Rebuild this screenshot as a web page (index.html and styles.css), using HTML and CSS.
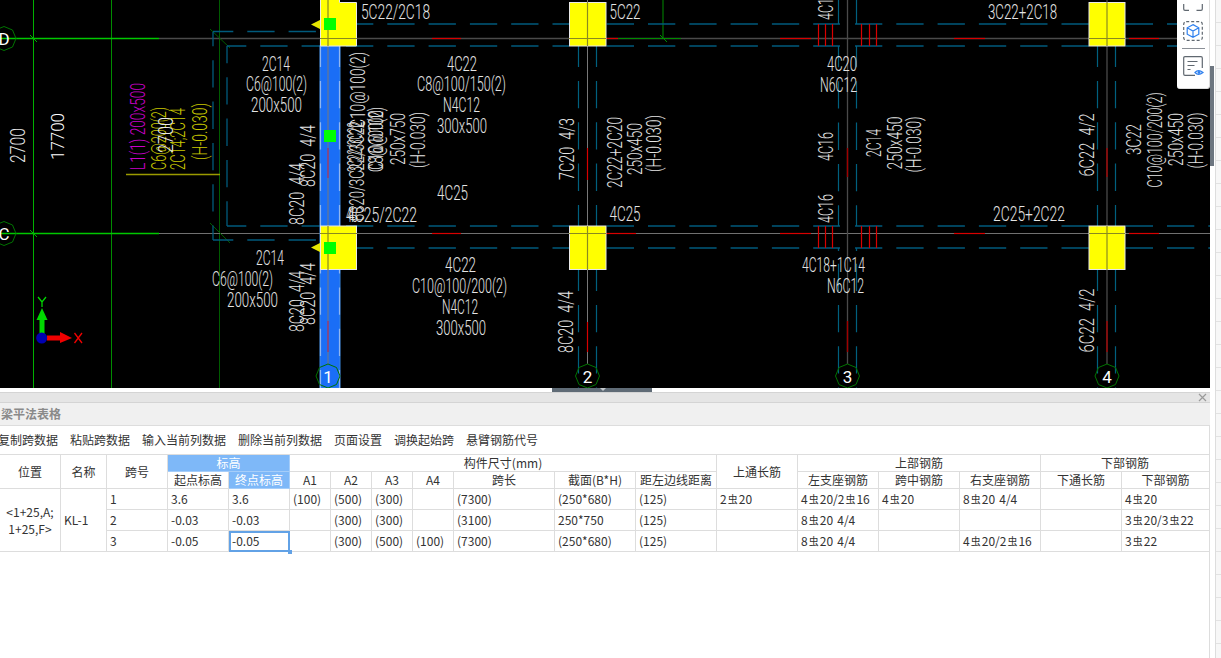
FILE: index.html
```html
<!DOCTYPE html>
<html lang="zh">
<head>
<meta charset="utf-8">
<title>梁平法表格</title>
<link rel="stylesheet" href="styles.css">
</head>
<body>
<div class="app">
<div class="main">
<section class="canvas">
<svg class="cad" width="1210" height="388" viewBox="0 0 1210 388">
<defs><polygon id="oct" points="12,0 8.5,8.5 0,12 -8.5,8.5 -12,0 -8.5,-8.5 0,-12 8.5,-8.5"/></defs>
<rect class="bg" width="1210" height="388"/>
<!-- grid -->
<line class="g1" x1="33.5" y1="0" x2="33.5" y2="388"/>
<line class="g2" x1="111.5" y1="0" x2="111.5" y2="388"/>
<line class="g3" x1="219.5" y1="0" x2="219.5" y2="388"/>
<line class="g2" x1="663" y1="0" x2="663" y2="38"/>
<line class="ax1" x1="159" y1="38.5" x2="1210" y2="38.5"/>
<line class="ax2" x1="159" y1="233.5" x2="1210" y2="233.5"/>
<line class="g1b" x1="0" y1="38.5" x2="159" y2="38.5"/>
<line class="g1b" x1="0" y1="233.5" x2="159" y2="233.5"/>
<line class="g2" x1="618" y1="38.5" x2="681" y2="38.5"/>
<line class="g1" x1="30" y1="35" x2="37" y2="42"/>
<line class="g1" x1="30" y1="230" x2="37" y2="237"/>
<line class="g3" x1="210" y1="29" x2="230" y2="48"/>
<line class="g3" x1="210" y1="223" x2="230" y2="243"/>
<line class="g2" x1="660" y1="35" x2="667" y2="42"/>
<!-- beam outlines -->
<line class="d" x1="346" y1="24" x2="569" y2="24"/>
<line class="d" x1="606.7" y1="24" x2="840" y2="24"/>
<line class="d" x1="855" y1="24" x2="1089" y2="24"/>
<line class="d" x1="1125.7" y1="24" x2="1177" y2="24"/>
<line class="d" x1="227" y1="46" x2="320" y2="46" stroke-dashoffset="8"/>
<line class="d" x1="346" y1="46" x2="569" y2="46"/>
<line class="d" x1="606.7" y1="46" x2="840" y2="46"/>
<line class="d" x1="855" y1="46" x2="1089" y2="46"/>
<line class="d" x1="1125.7" y1="46" x2="1177" y2="46"/>
<line class="d" x1="213" y1="31.5" x2="320" y2="31.5" stroke-dashoffset="7"/>
<line class="d" x1="213" y1="240" x2="320" y2="240" stroke-dashoffset="7"/>
<line class="d" x1="227" y1="226" x2="320" y2="226" stroke-dashoffset="8"/>
<line class="d" x1="346" y1="226" x2="569" y2="226"/>
<line class="d" x1="606.7" y1="226" x2="840" y2="226"/>
<line class="d" x1="855" y1="226" x2="1089" y2="226"/>
<line class="d" x1="1125.7" y1="226" x2="1210" y2="226"/>
<line class="d" x1="346" y1="248" x2="569" y2="248"/>
<line class="d" x1="606.7" y1="248" x2="840" y2="248"/>
<line class="d" x1="855" y1="248" x2="1089" y2="248"/>
<line class="d" x1="1125.7" y1="248" x2="1210" y2="248"/>
<line class="d" x1="213" y1="32" x2="213" y2="240" stroke-dashoffset="13"/>
<line class="d" x1="227" y1="46" x2="227" y2="226" stroke-dashoffset="10"/>
<line class="dv" x1="578.5" y1="39.7" x2="578.5" y2="226"/>
<line class="dv" x1="596.5" y1="39.7" x2="596.5" y2="226"/>
<line class="dv" x1="578.5" y1="263.7" x2="578.5" y2="388"/>
<line class="dv" x1="596.5" y1="263.7" x2="596.5" y2="388"/>
<line class="dv" x1="838.5" y1="-2" x2="838.5" y2="24"/>
<line class="dv" x1="856.5" y1="-2" x2="856.5" y2="24"/>
<line class="dv" x1="838.5" y1="46" x2="838.5" y2="226" stroke-dashoffset="6"/>
<line class="dv" x1="856.5" y1="46" x2="856.5" y2="226" stroke-dashoffset="6"/>
<line class="dv" x1="838.5" y1="263.7" x2="838.5" y2="388"/>
<line class="dv" x1="856.5" y1="263.7" x2="856.5" y2="388"/>
<line class="d" x1="838.5" y1="248" x2="838.5" y2="251"/>
<line class="d" x1="856.5" y1="248" x2="856.5" y2="251"/>
<line class="dv" x1="1097.5" y1="39.7" x2="1097.5" y2="226"/>
<line class="dv" x1="1115.5" y1="39.7" x2="1115.5" y2="226"/>
<line class="dv" x1="1097.5" y1="263.7" x2="1097.5" y2="388"/>
<line class="dv" x1="1115.5" y1="263.7" x2="1115.5" y2="388"/>
<!-- reinforcement marks -->
<line class="r" x1="432" y1="38.5" x2="461" y2="38.5"/>
<line class="r" x1="606" y1="38.5" x2="618" y2="38.5"/>
<line class="r" x1="780" y1="38.5" x2="811" y2="38.5"/>
<line class="r" x1="954" y1="38.5" x2="985" y2="38.5"/>
<line class="r" x1="1129" y1="38.5" x2="1159" y2="38.5"/>
<line class="r" x1="432" y1="233.5" x2="461" y2="233.5"/>
<line class="r" x1="606" y1="233.5" x2="636" y2="233.5"/>
<line class="r" x1="780" y1="233.5" x2="811" y2="233.5"/>
<line class="r" x1="954" y1="233.5" x2="985" y2="233.5"/>
<line class="r" x1="1129" y1="233.5" x2="1159" y2="233.5"/>
<line class="r" x1="818.5" y1="24" x2="818.5" y2="46"/>
<line class="r" x1="825.5" y1="24" x2="825.5" y2="46"/>
<line class="r" x1="832.5" y1="24" x2="832.5" y2="46"/>
<line class="r" x1="861.5" y1="24" x2="861.5" y2="46"/>
<line class="r" x1="869.5" y1="24" x2="869.5" y2="46"/>
<line class="r" x1="876.5" y1="24" x2="876.5" y2="46"/>
<line class="r" x1="818.5" y1="226" x2="818.5" y2="248"/>
<line class="r" x1="825.5" y1="226" x2="825.5" y2="248"/>
<line class="r" x1="832.5" y1="226" x2="832.5" y2="248"/>
<line class="r" x1="861.5" y1="226" x2="861.5" y2="248"/>
<line class="r" x1="869.5" y1="226" x2="869.5" y2="248"/>
<line class="r" x1="876.5" y1="226" x2="876.5" y2="248"/>
<!-- selected beam -->
<rect class="beam" x="320" y="46" width="20" height="342"/>
<line class="dl" x1="320.5" y1="39.7" x2="320.5" y2="388"/>
<line class="dl" x1="339.5" y1="39.7" x2="339.5" y2="388"/>
<!-- axes 1-4 -->
<line class="ax3" x1="328" y1="0" x2="328" y2="364"/>
<line class="ax3" x1="587.5" y1="0" x2="587.5" y2="364"/>
<line class="ax1" x1="847.5" y1="0" x2="847.5" y2="364"/>
<line class="ax1" x1="1107" y1="0" x2="1107" y2="364"/>
<line class="rd" x1="328" y1="148" x2="328" y2="178"/>
<line class="rd" x1="328" y1="321" x2="328" y2="352"/>
<line class="r" x1="587.5" y1="148" x2="587.5" y2="180"/>
<line class="r" x1="587.5" y1="322" x2="587.5" y2="352"/>
<line class="r2" x1="847.5" y1="148" x2="847.5" y2="177"/>
<line class="r2" x1="847.5" y1="321" x2="847.5" y2="352"/>
<line class="r2" x1="1107" y1="148" x2="1107" y2="177"/>
<line class="r2" x1="1107" y1="321" x2="1107" y2="352"/>
<!-- columns -->
<polygon class="col" points="320.5,-1 339.5,-1 339.5,2.5 356.5,2.5 356.5,46 320.5,46"/>
<rect class="col" x="569.5" y="2.5" width="36.5" height="43.5"/>
<rect class="col" x="1089" y="2.5" width="36" height="43.5"/>
<rect class="col" x="320.5" y="226" width="36" height="43.5"/>
<rect class="col" x="569.5" y="226" width="36.5" height="43.5"/>
<rect class="col" x="1089" y="226" width="36" height="43.5"/>
<line class="ov" x1="328" y1="0" x2="328" y2="46"/>
<line class="ov" x1="328" y1="226" x2="328" y2="270"/>
<line class="ov" x1="587.5" y1="2" x2="587.5" y2="46"/>
<line class="ov" x1="587.5" y1="226" x2="587.5" y2="270"/>
<line class="ov" x1="1107" y1="2" x2="1107" y2="46"/>
<line class="ov" x1="1107" y1="226" x2="1107" y2="270"/>
<line class="ov" x1="320" y1="38.5" x2="357" y2="38.5"/>
<line class="ov" x1="569" y1="38.5" x2="606" y2="38.5"/>
<line class="ov" x1="1089" y1="38.5" x2="1125" y2="38.5"/>
<line class="ov" x1="320" y1="233.5" x2="357" y2="233.5"/>
<line class="ov" x1="569" y1="233.5" x2="606" y2="233.5"/>
<line class="ov" x1="1089" y1="233.5" x2="1125" y2="233.5"/>
<rect class="grip" x="324" y="18" width="12" height="12"/>
<rect class="grip" x="324" y="130" width="12" height="12"/>
<rect class="grip" x="324" y="242" width="12" height="12"/>
<polygon class="tri" points="311,24.5 320,20 320,29"/>
<polygon class="tri" points="311,247.5 320,243 320,252"/>
<!-- axis bubbles -->
<use class="bub" href="#oct" x="4" y="38.5"/>
<use class="bub" href="#oct" x="4" y="233.5"/>
<use class="bub" href="#oct" x="328" y="376"/>
<use class="bub" href="#oct" x="587.5" y="376"/>
<use class="bub" href="#oct" x="847.5" y="376"/>
<use class="bub" href="#oct" x="1107" y="376"/>
<text class="n" x="4" y="45" text-anchor="middle">D</text>
<text class="n" x="4" y="240" text-anchor="middle">C</text>
<text class="n" x="328" y="383" text-anchor="middle">1</text>
<text class="n" x="587.5" y="383" text-anchor="middle">2</text>
<text class="n" x="847.5" y="383" text-anchor="middle">3</text>
<text class="n" x="1107" y="383" text-anchor="middle">4</text>
<!-- horizontal annotations -->
<text class="t" x="361" y="18.5" textLength="69" lengthAdjust="spacingAndGlyphs">5C22/2C18</text>
<text class="t" x="609.5" y="18.5" textLength="31" lengthAdjust="spacingAndGlyphs">5C22</text>
<text class="t" x="988" y="18.5" textLength="69" lengthAdjust="spacingAndGlyphs">3C22+2C18</text>
<text class="t" x="262" y="70.5" textLength="28" lengthAdjust="spacingAndGlyphs">2C14</text>
<text class="t" x="246" y="91" textLength="61" lengthAdjust="spacingAndGlyphs">C6@100(2)</text>
<text class="t" x="251" y="111.5" textLength="51" lengthAdjust="spacingAndGlyphs">200x500</text>
<text class="t" x="447" y="70.5" textLength="30" lengthAdjust="spacingAndGlyphs">4C22</text>
<text class="t" x="417" y="91" textLength="89" lengthAdjust="spacingAndGlyphs">C8@100/150(2)</text>
<text class="t" x="443" y="111.5" textLength="37" lengthAdjust="spacingAndGlyphs">N4C12</text>
<text class="t" x="437" y="132.5" textLength="50" lengthAdjust="spacingAndGlyphs">300x500</text>
<text class="t" x="437" y="200" textLength="31" lengthAdjust="spacingAndGlyphs">4C25</text>
<text class="t" x="347" y="221.5" textLength="70" lengthAdjust="spacingAndGlyphs">4C25/2C22</text>
<text class="t" x="346" y="221.5" textLength="12" lengthAdjust="spacingAndGlyphs">4C</text>
<text class="t" x="609.5" y="221" textLength="31" lengthAdjust="spacingAndGlyphs">4C25</text>
<text class="t" x="993" y="221" textLength="72" lengthAdjust="spacingAndGlyphs">2C25+2C22</text>
<text class="t" x="256" y="265" textLength="28" lengthAdjust="spacingAndGlyphs">2C14</text>
<text class="t" x="212" y="286" textLength="61" lengthAdjust="spacingAndGlyphs">C6@100(2)</text>
<text class="t" x="227" y="306.5" textLength="51" lengthAdjust="spacingAndGlyphs">200x500</text>
<text class="t" x="445" y="272" textLength="31" lengthAdjust="spacingAndGlyphs">4C22</text>
<text class="t" x="412" y="293" textLength="95" lengthAdjust="spacingAndGlyphs">C10@100/200(2)</text>
<text class="t" x="442" y="314" textLength="36" lengthAdjust="spacingAndGlyphs">N4C12</text>
<text class="t" x="436" y="335" textLength="50" lengthAdjust="spacingAndGlyphs">300x500</text>
<text class="t" x="827" y="70.5" textLength="30" lengthAdjust="spacingAndGlyphs">4C20</text>
<text class="t" x="820" y="91.5" textLength="37" lengthAdjust="spacingAndGlyphs">N6C12</text>
<text class="t" x="802" y="271.5" textLength="63" lengthAdjust="spacingAndGlyphs">4C18+1C14</text>
<text class="t" x="827" y="293" textLength="37" lengthAdjust="spacingAndGlyphs">N6C12</text>
<!-- vertical annotations -->
<text class="w" transform="translate(25 163) rotate(-90)" font-size="25" textLength="35" lengthAdjust="spacingAndGlyphs">2700</text>
<text class="wb" transform="translate(64 160) rotate(-90)" textLength="47" lengthAdjust="spacingAndGlyphs">17700</text>
<text class="m" transform="translate(145 170) rotate(-90)" textLength="87" lengthAdjust="spacingAndGlyphs">L1(1) 200x500</text>
<text class="y" transform="translate(166 170) rotate(-90)" textLength="63" lengthAdjust="spacingAndGlyphs">C6@200(2)</text>
<text class="y" transform="translate(185 170) rotate(-90)" textLength="62" lengthAdjust="spacingAndGlyphs">2C14;2C14</text>
<text class="y" transform="translate(207 160) rotate(-90)" textLength="57" lengthAdjust="spacingAndGlyphs">(H-0.030)</text>
<text class="w" transform="translate(173 153) rotate(-90)" font-size="18" textLength="36" lengthAdjust="spacingAndGlyphs">2700</text>
<line class="yl" x1="126" y1="174.5" x2="220" y2="174.5"/>
<text class="t" transform="translate(315 187) rotate(-90)" textLength="62" lengthAdjust="spacingAndGlyphs">8C20&#160;&#160;4/4</text>
<text class="t" transform="translate(303.5 225) rotate(-90)" textLength="62" lengthAdjust="spacingAndGlyphs">8C20&#160;&#160;4/4</text>
<text class="t" transform="translate(303.5 332) rotate(-90)" textLength="61" lengthAdjust="spacingAndGlyphs">8C20&#160;&#160;4/4</text>
<text class="t" transform="translate(315 325) rotate(-90)" textLength="62" lengthAdjust="spacingAndGlyphs">8C20&#160;&#160;4/4</text>
<text class="t" transform="translate(364 221) rotate(-90)" textLength="100" lengthAdjust="spacingAndGlyphs">8C20/3C22/3C22</text>
<text class="t" transform="translate(362 172) rotate(-90)" textLength="50" lengthAdjust="spacingAndGlyphs">3C22/3C22</text>
<text class="t" transform="translate(365 128) rotate(-90)" textLength="76" lengthAdjust="spacingAndGlyphs">C10@100(2)</text>
<text class="t" transform="translate(383 172) rotate(-90)" textLength="65" lengthAdjust="spacingAndGlyphs">C8@100(2)</text>
<text class="t" transform="translate(383 170) rotate(-90)" textLength="60" lengthAdjust="spacingAndGlyphs">C10@100</text>
<text class="t" transform="translate(405 165) rotate(-90)" textLength="52" lengthAdjust="spacingAndGlyphs">250x750</text>
<text class="t" transform="translate(425 168) rotate(-90)" textLength="56" lengthAdjust="spacingAndGlyphs">(H-0.030)</text>
<text class="t" transform="translate(574 180) rotate(-90)" textLength="62" lengthAdjust="spacingAndGlyphs">7C20&#160;&#160;4/3</text>
<text class="t" transform="translate(621.5 188) rotate(-90)" textLength="71" lengthAdjust="spacingAndGlyphs">2C22+2C20</text>
<text class="t" transform="translate(641.5 175) rotate(-90)" textLength="52" lengthAdjust="spacingAndGlyphs">250x450</text>
<text class="t" transform="translate(660.5 172) rotate(-90)" textLength="57" lengthAdjust="spacingAndGlyphs">(H-0.030)</text>
<text class="t" transform="translate(573 353) rotate(-90)" textLength="62" lengthAdjust="spacingAndGlyphs">8C20&#160;&#160;4/4</text>
<text class="t" transform="translate(833 20) rotate(-90)" textLength="29" lengthAdjust="spacingAndGlyphs">4C16</text>
<text class="t" transform="translate(833 161) rotate(-90)" textLength="29" lengthAdjust="spacingAndGlyphs">4C16</text>
<text class="t" transform="translate(833 223) rotate(-90)" textLength="29" lengthAdjust="spacingAndGlyphs">4C16</text>
<text class="t" transform="translate(881 157) rotate(-90)" textLength="28" lengthAdjust="spacingAndGlyphs">2C14</text>
<text class="t" transform="translate(901.5 169.5) rotate(-90)" textLength="53" lengthAdjust="spacingAndGlyphs">250x450</text>
<text class="t" transform="translate(920.5 172.5) rotate(-90)" textLength="56" lengthAdjust="spacingAndGlyphs">(H-0.030)</text>
<text class="t" transform="translate(1093.5 176.5) rotate(-90)" textLength="63" lengthAdjust="spacingAndGlyphs">6C22&#160;&#160;4/2</text>
<text class="t" transform="translate(1140.5 155) rotate(-90)" textLength="31" lengthAdjust="spacingAndGlyphs">3C22</text>
<text class="t" transform="translate(1161.5 187.5) rotate(-90)" textLength="95" lengthAdjust="spacingAndGlyphs">C10@100/200(2)</text>
<text class="t" transform="translate(1182.5 166) rotate(-90)" textLength="53" lengthAdjust="spacingAndGlyphs">250x450</text>
<text class="t" transform="translate(1202.5 168.5) rotate(-90)" textLength="56" lengthAdjust="spacingAndGlyphs">(H-0.030)</text>
<text class="t" transform="translate(1093.5 352.5) rotate(-90)" textLength="64" lengthAdjust="spacingAndGlyphs">6C22&#160;&#160;4/2</text>
<!-- UCS gizmo -->
<rect class="gy" x="39.5" y="320" width="5" height="18"/>
<polygon class="gy" points="36.5,320 47.5,320 42,308"/>
<rect class="rx" x="47" y="335.5" width="14" height="5"/>
<polygon class="rx" points="60,332 60,343 72,338"/>
<circle class="bl" cx="41.7" cy="338" r="5.5"/>
<path class="gys" d="M38 297l4 5 4-5M42 302v5"/>
<path class="rxs" d="M74.5 333l7.5 10M82 333l-7.5 10"/>
</svg>
<aside class="tools">
<svg class="ic-top" width="20" height="11" viewBox="0 0 20 11"><path d="M.7 4v5q0 1.3 1.3 1.3h4M13.5 10.3H18q1.3 0 1.3-1.3V4"/></svg>
<svg class="ic" width="20" height="20" viewBox="0 0 20 20"><rect class="dbox" x=".7" y=".7" width="18.600" height="18.600" rx="2.500"/><path class="blue" d="M10 3.600l5.800 3.200v6.400L10 16.400l-5.800-3.200V6.800zM4.200 6.800l5.800 3.200 5.800-3.200M10 10v6.400"/></svg>
<div class="tool-sep"></div>
<svg class="ic" width="22" height="22" viewBox="0 0 22 22"><path d="M12 19.300H2q-1.300 0-1.300-1.300V2Q.7.7 2 .7h16Q19.300.7 19.300 2v10"/><path d="M4.500 5.500h10M4.500 9.500h7M4.500 13.500h3"/><path class="blue" d="M12 16.500q3.300-3.800 8 0-4.700 3.800-8 0z"/><circle class="dot" cx="16" cy="16.500" r="1.400"/></svg>
</aside>
</section>
<div class="split"><div class="handle"><span class="caret"></span></div></div>
<section class="panel">
<div class="bar"><svg class="x" width="9" height="9" viewBox="0 0 9 9"><path d="M1 1l7 7M8 1L1 8"/></svg></div>
<div class="title">梁平法表格</div>
<div class="menu"><span>复制跨数据</span><span>粘贴跨数据</span><span>输入当前列数据</span><span>删除当前列数据</span><span>页面设置</span><span>调换起始跨</span><span>悬臂钢筋代号</span></div>
<table class="grid">
<colgroup><col class="c61"><col class="c46"><col class="c61"><col class="c61"><col class="c61"><col class="c41"><col class="c41"><col class="c41"><col class="c41"><col class="c101"><col class="c81"><col class="c81"><col class="c81"><col class="c81"><col class="c81"><col class="c81"><col class="c81"><col class="c88"></colgroup>
<thead>
<tr><th rowspan="2">位置</th><th rowspan="2">名称</th><th rowspan="2">跨号</th><th colspan="2" class="hl">标高</th><th colspan="7">构件尺寸(mm)</th><th rowspan="2">上通长筋</th><th colspan="3">上部钢筋</th><th colspan="2">下部钢筋</th></tr>
<tr><th>起点标高</th><th class="hl">终点标高</th><th>A1</th><th>A2</th><th>A3</th><th>A4</th><th>跨长</th><th>截面(B*H)</th><th>距左边线距离</th><th>左支座钢筋</th><th>跨中钢筋</th><th>右支座钢筋</th><th>下通长筋</th><th>下部钢筋</th></tr>
</thead>
<tbody>
<tr><td rowspan="3" class="pos">&lt;1+25,A;<br>1+25,F&gt;</td><td rowspan="3">KL-1</td><td>1</td><td>3.6</td><td>3.6</td><td>(100)</td><td>(500)</td><td>(300)</td><td></td><td>(7300)</td><td>(250*680)</td><td>(125)</td><td>2<span class="rb">虫</span>20</td><td>4<span class="rb">虫</span>20/2<span class="rb">虫</span>16</td><td>4<span class="rb">虫</span>20</td><td>8<span class="rb">虫</span>20 4/4</td><td></td><td>4<span class="rb">虫</span>20</td></tr>
<tr><td>2</td><td>-0.03</td><td>-0.03</td><td></td><td>(300)</td><td>(300)</td><td></td><td>(3100)</td><td>250*750</td><td>(125)</td><td></td><td>8<span class="rb">虫</span>20 4/4</td><td></td><td></td><td></td><td>3<span class="rb">虫</span>20/3<span class="rb">虫</span>22</td></tr>
<tr><td>3</td><td>-0.05</td><td class="sel">-0.05</td><td></td><td>(300)</td><td>(500)</td><td>(100)</td><td>(7300)</td><td>(250*680)</td><td>(125)</td><td></td><td>8<span class="rb">虫</span>20 4/4</td><td></td><td>4<span class="rb">虫</span>20/2<span class="rb">虫</span>16</td><td></td><td>3<span class="rb">虫</span>22</td></tr>
</tbody>
</table>
</section>
</div>
<aside class="rail"><div class="track"><div class="thumb"></div></div><div class="ticks"></div></aside>
</div>
</body>
</html>
```
FILE: styles.css
```css
*{box-sizing:border-box}
html,body{margin:0;padding:0;background:#fff}
body{width:1221px;height:658px;overflow:hidden;font-family:"Noto Sans CJK SC","Liberation Sans",sans-serif;font-size:12px;color:#333}
.app{display:flex;width:1221px;height:658px}
.main{width:1210px;display:flex;flex-direction:column}
.canvas{position:relative;height:388px;flex:none;background:#000}
.cad{display:block}
.bg{fill:#000}
line{fill:none;stroke-width:1}
.g1{stroke:#00b000}
.g1b{stroke:#00c800;stroke-width:1.4}
.g2{stroke:#008c00}
.g3{stroke:#005c00}
.ax1{stroke:#4a4a4a;stroke-width:1.3}
.ax2{stroke:#707070}
.ax3{stroke:#787878}
.d{stroke:#005a7c;stroke-width:1.3;stroke-dasharray:27.3 14}
.dv{stroke:#00607f;stroke-width:1.2;stroke-dasharray:27.3 14}
.dl{stroke:#8fb6f0;stroke-width:1.2;stroke-dasharray:27.3 14}
.r{stroke:#d80000;stroke-width:1.2}
.r2{stroke:#a00000;stroke-width:1.4}
.rd{stroke:#a0306c;stroke-width:1.2}
.beam{fill:#1a6ef6;stroke:#3a88de;stroke-width:1}
.col{fill:#ff0;stroke:#e8e8e8;stroke-width:1}
.ov{stroke:#8a8a20;stroke-width:1.2}
.grip{fill:#0f0}
.tri{fill:#e6e600}
.bub{fill:none;stroke:#007400;stroke-width:1}
.yl{stroke:#9a9a00;stroke-width:1.4}
text{font-family:"Roboto","Liberation Sans",sans-serif;font-weight:300;font-size:21px}
.t{fill:#e4e4e4}
.n{fill:#fff;font-size:17px;font-weight:400}
.w{fill:#e8e8e8}
.wb{fill:#fff;font-size:18px;font-weight:300}
.m{fill:#c800c8;font-size:21px}
.y{fill:#c8c800;font-size:21px}
.gy{fill:#00d800}
.rx{fill:#f00000}
.bl{fill:#0000b0}
.gys{fill:none;stroke:#00d800;stroke-width:1.3}
.rxs{fill:none;stroke:#f00000;stroke-width:1.3}
.tools{position:absolute;left:1177px;top:0;width:33px;height:89px;background:#fff;border:solid #ddd;border-width:0 1px 1px 0;border-radius:0 0 3px 3px;display:flex;flex-direction:column;align-items:flex-start;padding-left:6px}
.tools svg{display:block;fill:none;stroke:#606870;stroke-width:1.2}
.ic{margin-top:10px}
.dbox{stroke-dasharray:3 2}
.tools .blue{stroke:#2f80ee;fill:none}
.tools .dot{fill:#2f80ee;stroke:none}
.tool-sep{width:23px;height:1px;background:#8a8f96;margin:7px 0 -3px -1px}
.split{height:4px;background:#fff;position:relative;flex:none}
.handle{position:absolute;left:552px;top:0;width:100px;height:4px;background:#5f6b76}
.caret{position:absolute;left:48px;top:0;border:solid transparent;border-width:3px 3px 0;border-top-color:#c4c8cc}
.panel{flex:1;display:flex;flex-direction:column;border-right:1px solid #ddd;position:relative}
.bar{height:11px;flex:none;background:#e5e5e5;border:solid #d4d4d4;border-width:1px 0;display:flex;justify-content:flex-end;align-items:center;padding-right:3px;margin-right:-1px}
.x{display:block;fill:none;stroke:#9a9a9a;stroke-width:1.2}
.title{height:23px;flex:none;background:#f0f0f0;border-bottom:1px solid #ddd;padding-left:1px;font-weight:700;font-size:12px;line-height:21px;color:#8a8a8a;margin-right:-1px}
.menu{height:28px;flex:none;display:flex;gap:12px;align-items:center;margin-left:-2px;line-height:16px;color:#333}
.grid{border-collapse:separate;border-spacing:0;table-layout:fixed;width:1210px;border-top:1px solid #ddd;margin-right:-1px;flex:none}
.c41{width:41px}.c46{width:46px}.c61{width:61px}.c81{width:81px}.c88{width:88px}.c101{width:101px}
thead tr{height:17px}
tbody tr{height:21px}
th,td{padding:0;border:solid #ddd;border-width:0 1px 1px 0;font-size:12px;white-space:nowrap;line-height:16px;overflow:hidden}
th{font-weight:400;text-align:center;color:#333}
td{padding-left:3px;text-align:left;color:#333;word-spacing:1.5px}
th.hl{background:#7eb8f8;color:#fff;border-color:#a5cdf9}
td.pos{padding:0;text-align:center;line-height:17px}
.rb{font-size:10px;position:relative;top:-1px;margin:0 1px}
td.sel{outline:2px solid #62a2e6;outline-offset:-2px;position:relative;overflow:visible}
td.sel::after{content:"";position:absolute;right:-3px;bottom:-3px;width:4px;height:4px;background:#62a2e6}
.rail{width:11px;display:flex;background:#f7f7f7}
.track{background:#fff;border-right:1px solid #ddd;flex:none;padding-top:66px;width:6px}
.thumb{width:4px;height:100px;background:#6d7680}
.ticks{flex:1;background:repeating-linear-gradient(180deg,#f7f7f7 0,#f7f7f7 22px,#e2e2e2 22px,#e2e2e2 23px)}
```
